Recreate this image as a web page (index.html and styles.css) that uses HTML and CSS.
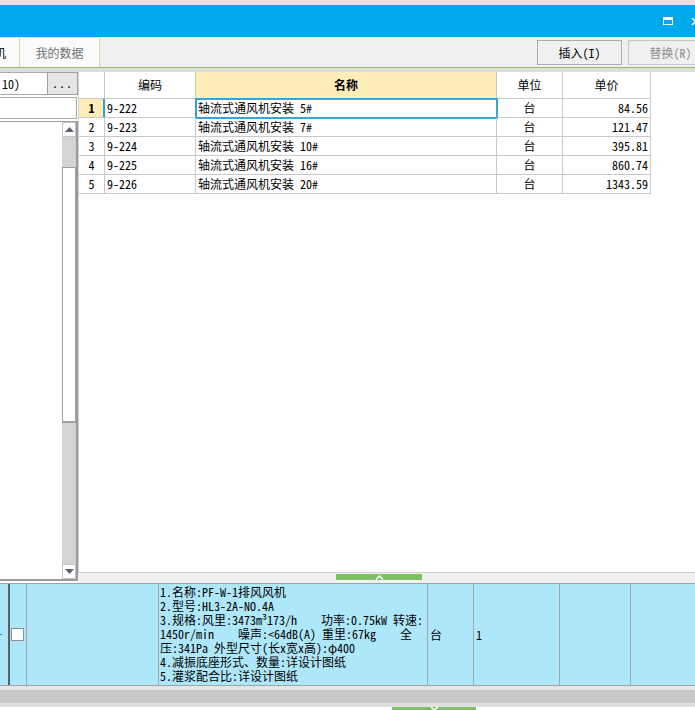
FILE: index.html
```html
<!DOCTYPE html>
<html lang="zh-CN">
<head>
<meta charset="utf-8">
<title>定额选择</title>
<link rel="stylesheet" href="styles.css">
</head>
<body>
<div class="app">
  <div class="topline"></div>
  <div class="titlebar">
    <svg class="ic-max" width="10" height="8" viewBox="0 0 10 8"><rect x="0.5" y="0.5" width="9" height="7" fill="none" stroke="#fff"/><rect x="0" y="0" width="10" height="3" fill="#fff"/></svg>
    <svg class="ic-close" width="9" height="9" viewBox="0 0 9 9"><path d="M1 1L8 8M8 1L1 8" stroke="#fff" stroke-width="1.5" fill="none"/></svg>
  </div>
  <div class="tabbar">
    <div class="tab tab-cut"><span>机</span></div>
    <div class="tab tab-mine">我的数据</div>
    <div class="tools">
      <button class="btn">插入(I)</button>
      <button class="btn btn-off">替换(R)</button>
    </div>
  </div>
  <div class="band"></div>
  <div class="main">
    <div class="side">
      <div class="pick">
        <div class="pick-input">10)</div>
        <div class="pick-btn">...</div>
      </div>
      <div class="side-input"></div>
      <div class="listbox">
        <div class="vscroll">
          <div class="sb-btn"><svg width="9" height="5" viewBox="0 0 9 5"><path d="M0 5L4.5 0L9 5Z" fill="#5e6070"/></svg></div>
          <div class="sb-gap"></div>
          <div class="sb-thumb"></div>
          <div class="sb-fill"></div>
          <div class="sb-btn"><svg width="9" height="5" viewBox="0 0 9 5"><path d="M0 0L4.5 5L9 0Z" fill="#5e6070"/></svg></div>
        </div>
      </div>
    </div>
    <div class="gridcol">
      <div class="grid">
        <div class="row head">
          <div></div>
          <div>编码</div>
          <div class="c-name">名称</div>
          <div>单位</div>
          <div>单价</div>
        </div>
        <div class="row sel">
          <div class="c-no">1</div>
          <div class="c-code">9-222</div>
          <div class="c-txt focus">轴流式通风机安装 5#</div>
          <div class="c-unit">台</div>
          <div class="c-price">84.56</div>
        </div>
        <div class="row">
          <div class="c-no">2</div>
          <div class="c-code">9-223</div>
          <div class="c-txt">轴流式通风机安装 7#</div>
          <div class="c-unit">台</div>
          <div class="c-price">121.47</div>
        </div>
        <div class="row">
          <div class="c-no">3</div>
          <div class="c-code">9-224</div>
          <div class="c-txt">轴流式通风机安装 10#</div>
          <div class="c-unit">台</div>
          <div class="c-price">395.81</div>
        </div>
        <div class="row">
          <div class="c-no">4</div>
          <div class="c-code">9-225</div>
          <div class="c-txt">轴流式通风机安装 16#</div>
          <div class="c-unit">台</div>
          <div class="c-price">860.74</div>
        </div>
        <div class="row">
          <div class="c-no">5</div>
          <div class="c-code">9-226</div>
          <div class="c-txt">轴流式通风机安装 20#</div>
          <div class="c-unit">台</div>
          <div class="c-price">1343.59</div>
        </div>
      </div>
      <div class="split">
        <div class="handle"><svg width="9" height="5" viewBox="0 0 9 5"><path d="M1 4.5L4.5 1L8 4.5" stroke="#fff" stroke-width="1.5" fill="none"/></svg></div>
      </div>
    </div>
  </div>
  <div class="detail">
    <div class="dc d0"><span class="mark"></span></div>
    <div class="dc d1"><span class="check"></span></div>
    <div class="dc d2"></div>
    <div class="dc d3"><div>1.名称:PF-W-1排风风机</div><div>2.型号:HL3-2A-NO.4A</div><div>3.规格:风里:3473m³173/h    功率:0.75kW 转速:</div><div>1450r/min    噪声:&lt;64dB(A) 重里:67kg    全</div><div>压:341Pa 外型尺寸(长x宽x高):φ400</div><div>4.减振底座形式、数量:详设计图纸</div><div>5.灌浆配合比:详设计图纸</div></div>
    <div class="dc d4">台</div>
    <div class="dc d5">1</div>
    <div class="dc d6"></div>
    <div class="d7"></div>
  </div>
  <div class="hband"></div>
  <div class="hbar"></div>
  <div class="hline"></div>
  <div class="hfoot"><div class="handle2"><svg width="9" height="3" viewBox="0 0 9 3"><path d="M1 0L4.5 3L8 0" stroke="#fff" stroke-width="1.5" fill="none"/></svg></div></div>
</div>
</body>
</html>
```
FILE: styles.css
```css
body {
  margin: 0;
  background: #fff;
  font-family: "Noto Sans Mono CJK SC", "Noto Sans CJK SC", monospace;
  font-size: 12px;
  color: #000;
}

.app {
  width: 695px;
  height: 710px;
  overflow: hidden;
  display: flex;
  flex-direction: column;
}

.topline {
  flex: none;
  height: 5px;
  background: #e3e3e3;
}

.titlebar {
  flex: none;
  height: 32px;
  background: #00a9ec;
  display: flex;
  align-items: center;
  justify-content: flex-end;
  gap: 18px;
}

.ic-max, .ic-close {
  flex: none;
  display: block;
}

.ic-close {
  margin-right: -5px;
}

.tabbar {
  flex: none;
  height: 31px;
  box-sizing: border-box;
  background: #f0f0f0;
  border-bottom: 1px solid #85c26c;
  display: flex;
}

.tab {
  flex: none;
  box-sizing: border-box;
  height: 30px;
  border-top: 1px solid #d3e9c8;
  border-right: 1px solid #bfe0b0;
  background: #fbfbfb;
  display: flex;
  align-items: center;
  justify-content: center;
  white-space: nowrap;
}

.tab-cut {
  width: 20px;
  justify-content: flex-end;
  padding-right: 13px;
  overflow: hidden;
}

.tab-mine {
  width: 80px;
  color: #707070;
}

.tools {
  margin-left: auto;
  margin-right: -18px;
  padding-top: 3px;
  display: flex;
  gap: 6px;
}

.btn {
  width: 85px;
  height: 25px;
  box-sizing: border-box;
  border: 1px solid #adadad;
  background: #f0f0f0;
  font: inherit;
  color: #000;
  padding: 0;
  border-radius: 0;
}

.btn-off {
  color: #8c8c8c;
  border-color: #c6c6c6;
}

.band {
  flex: none;
  height: 4px;
  background: #dedede;
}

.main {
  flex: none;
  height: 511px;
  display: flex;
}

.side {
  flex: none;
  width: 78px;
  display: flex;
  flex-direction: column;
  background: #fff;
}

.pick {
  display: flex;
  height: 23px;
}

.pick-input {
  width: 47px;
  box-sizing: border-box;
  border-top: 1px solid #a9a9a9;
  border-bottom: 1px solid #a9a9a9;
  padding-left: 2px;
  line-height: 21px;
  background: #fff;
}

.pick-btn {
  width: 31px;
  box-sizing: border-box;
  border: 1px solid #a0a0a0;
  background: #e6e6e6;
  text-align: center;
  line-height: 19px;
  letter-spacing: 1px;
}

.side-input {
  width: 77px;
  height: 22px;
  margin-top: 2px;
  box-sizing: border-box;
  border: 1px solid #a9a9a9;
  border-left: none;
  background: #fff;
}

.listbox {
  margin-top: 2px;
  height: 460px;
  box-sizing: border-box;
  border-top: 1px solid #a0a0a0;
  border-right: 2px solid #9a9a9a;
  border-bottom: 2px solid #9a9a9a;
  display: flex;
  justify-content: flex-end;
  background: #fff;
}

.vscroll {
  width: 14px;
  display: flex;
  flex-direction: column;
  background: #d4d4d4;
}

.sb-btn {
  flex: none;
  height: 15px;
  box-sizing: border-box;
  background: #fff;
  border: 1px solid #c4c4c4;
  display: flex;
  align-items: center;
  justify-content: center;
}

.sb-gap {
  flex: none;
  height: 30px;
}

.sb-thumb {
  flex: none;
  height: 256px;
  box-sizing: border-box;
  background: #fff;
  border: 1px solid #a0a0a0;
  border-bottom-width: 2px;
}

.sb-fill {
  flex: 1;
}

.gridcol {
  flex: 1;
  display: flex;
  flex-direction: column;
}

.grid {
  flex: none;
  height: 501px;
  box-sizing: border-box;
  border-left: 1px solid #d6d6d6;
  border-bottom: 1px solid #d0d0d0;
  background: #fff;
}

.row {
  display: grid;
  grid-template-columns: 26px 91px 301px 66px 88px;
}

.row > div {
  height: 19px;
  box-sizing: border-box;
  border-right: 1px solid #c9c9c9;
  border-bottom: 1px solid #c9c9c9;
  line-height: 18px;
  white-space: nowrap;
  overflow: hidden;
}

.head > div {
  height: 27px;
  line-height: 26px;
  text-align: center;
}

.head .c-name {
  background: #ffedb8;
  font-weight: bold;
}

.c-no {
  text-align: center;
}

.sel .c-no {
  background: #ffedb8;
  font-weight: bold;
  border-right-color: #2ea3d5;
  box-shadow: inset -1px 0 0 #2ea3d5;
}

.c-code {
  padding-left: 2px;
}

.c-txt {
  padding-left: 2px;
}

.row > .focus {
  overflow: visible;
  outline: 2px solid #35a5d8;
  outline-offset: -1px;
}

.c-unit {
  text-align: center;
}

.c-price {
  text-align: right;
  padding-right: 2px;
}

.split {
  flex: none;
  height: 10px;
  background: #f0f0f0;
}

.handle {
  width: 86px;
  height: 6px;
  margin: 1px 0 0 258px;
  background: #7dc163;
  display: flex;
  justify-content: center;
  align-items: flex-end;
}

.handle svg {
  display: block;
}

.detail {
  flex: none;
  height: 103px;
  box-sizing: border-box;
  border-top: 1px solid #a3a3a3;
  border-bottom: 1px solid #a3a3a3;
  background: #aee7f9;
  display: flex;
}

.dc {
  flex: none;
  box-sizing: border-box;
  border-right: 1px solid #a5a5a5;
}

.d0 {
  width: 10px;
  border-right: 2px solid #5f5f5f;
  display: flex;
  align-items: center;
}

.mark {
  width: 2px;
  height: 1px;
  background: #1e88d0;
}

.d1 {
  width: 17px;
  display: flex;
  align-items: center;
  padding-left: 1px;
}

.check {
  width: 13px;
  height: 13px;
  box-sizing: border-box;
  border: 1px solid #8f8f8f;
  background: #fff;
}

.d2 {
  width: 132px;
}

.d3 {
  width: 269px;
  padding: 1px 0 0 1px;
  line-height: 14px;
  white-space: pre;
  overflow: hidden;
}

.d4 {
  width: 46px;
  padding-left: 2px;
  display: flex;
  align-items: center;
}

.d5 {
  width: 86px;
  padding-left: 2px;
  display: flex;
  align-items: center;
}

.d6 {
  width: 71px;
}

.d7 {
  flex: 1;
}

.hband {
  flex: none;
  height: 4px;
  background: #e6e6e6;
}

.hbar {
  flex: none;
  height: 13px;
  background: #c8c8c8;
}

.hline {
  flex: none;
  height: 4px;
  background: #e0e0e0;
}

.hfoot {
  flex: none;
  height: 3px;
  background: #fff;
}

.handle2 {
  width: 84px;
  height: 3px;
  margin-left: 392px;
  background: #7dc163;
  display: flex;
  justify-content: center;
}

.handle2 svg {
  display: block;
}
```
